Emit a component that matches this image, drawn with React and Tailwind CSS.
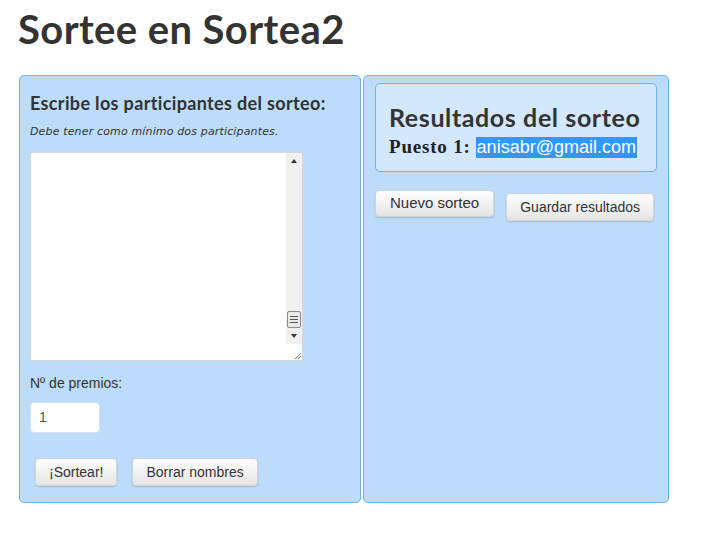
export default function App() {
  const head = { fontFamily: "Lato, 'Noto Sans', sans-serif" };
  const arial = { fontFamily: "'Liberation Sans', Arial, sans-serif" };
  const btn =
    "h-[28px] px-[13px] rounded-[4px] border border-[#d4d4d4] bg-gradient-to-b from-white to-[#e4e4e4] shadow-[0_1px_2px_rgba(0,0,0,0.15)] text-[14px] text-[#333] whitespace-nowrap";

  return (
    <div className="w-[724px] h-[540px] bg-white overflow-hidden">
      <h1
        className="pl-[18px] pt-[6px] text-[40px] leading-[46px] font-bold tracking-[0.4px] text-[#333]"
        style={head}
      >
        Sortee en Sortea2
      </h1>

      <div className="flex gap-[2px] ml-[19px] mt-[23px]">
        {/* left panel */}
        <div className="w-[342px] h-[428px] rounded-[5px] border border-[#6cb2ea] bg-[#bcdcf9] px-[10px] pt-[17px]">
          <h4
            className="text-[18px] leading-[20px] font-bold tracking-[0.35px] text-[#333]"
            style={head}
          >
            Escribe los participantes del sorteo:
          </h4>
          <p
            className="mt-[12px] text-[11px] leading-[14px] italic tracking-[0.15px] text-[#333]"
            style={{ fontFamily: "'DejaVu Sans', Verdana, sans-serif" }}
          >
            Debe tener como mínimo dos participantes.
          </p>

          <div className="mt-[13px] w-[273px] h-[209px] bg-white border border-[#d6d6d6] flex justify-end">
            <div className="w-[16px] h-full flex flex-col bg-[#f0f0f0]">
              <div className="h-[16px] flex items-center justify-center">
                <div className="w-0 h-0 border-l-[3px] border-r-[3px] border-b-[4px] border-l-transparent border-r-transparent border-b-[#333]" />
              </div>
              <div className="flex-1" />
              <div className="mx-[1px] h-[17px] rounded-[2px] border border-[#8a8a8a] bg-[#e8e8e8] flex flex-col items-center justify-center gap-[2px]">
                <div className="w-[8px] h-px bg-[#555]" />
                <div className="w-[8px] h-px bg-[#555]" />
                <div className="w-[8px] h-px bg-[#555]" />
              </div>
              <div className="h-[16px] flex items-center justify-center">
                <div className="w-0 h-0 border-l-[3px] border-r-[3px] border-t-[4px] border-l-transparent border-r-transparent border-t-[#333]" />
              </div>
              <div className="h-[16px] bg-white flex items-end justify-end">
                <svg width="10" height="10" viewBox="0 0 10 10">
                  <path d="M9 3 L3 9 M9 6 L6 9" stroke="#777" strokeWidth="1" />
                </svg>
              </div>
            </div>
          </div>

          <p className="mt-[12px] text-[14px] leading-[20px] text-[#333]" style={arial}>
            Nº de premios:
          </p>
          <div
            className="mt-[9px] w-[70px] h-[31px] rounded-[4px] bg-white border border-[#cfe2f3] pl-[8px] flex items-center text-[14px] text-[#555]"
            style={arial}
          >
            1
          </div>

          <div className="mt-[25px] ml-[5px] flex gap-[15px]" style={arial}>
            <button className={btn}>¡Sortear!</button>
            <button className={btn}>Borrar nombres</button>
          </div>
        </div>

        {/* right panel */}
        <div className="w-[306px] h-[428px] rounded-[5px] border border-[#6cb2ea] bg-[#bcdcf9] px-[11px] pt-[7px]">
          <div className="h-[89px] rounded-[5px] border border-[#6cb2ea] bg-[#d3e8fc] pl-[13px] pt-[18px]">
            <h3
              className="text-[25px] leading-[30px] font-bold tracking-[0.6px] whitespace-nowrap text-[#333]"
              style={head}
            >
              Resultados del sorteo
            </h3>
            <div className="mt-[1px] flex items-center whitespace-nowrap text-[#222]">
              <span
                className="text-[19px] font-bold tracking-[0.8px]"
                style={{ fontFamily: "'Liberation Serif', 'Times New Roman', serif" }}
              >
                Puesto 1:
              </span>
              <span
                className="ml-[5px] bg-[#3297fd] text-white text-[18px] leading-[21px] px-[1px]"
                style={arial}
              >
                anisabr@gmail.com
              </span>
            </div>
          </div>

          <div className="mt-[18px] flex items-start gap-[12px]" style={arial}>
            <button className={btn + " !h-[27px] !px-[14px] !text-[15px]"}>Nuevo sorteo</button>
            <button className={btn + " mt-[3px]"}>Guardar resultados</button>
          </div>
        </div>
      </div>
    </div>
  );
}
